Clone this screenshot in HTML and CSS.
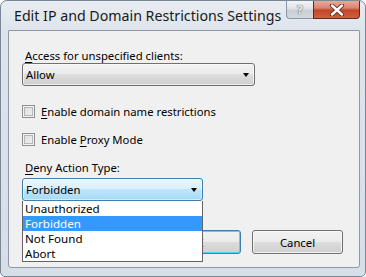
FILE: index.html
```html
<!DOCTYPE html>
<html>
<head>
<meta charset="utf-8">
<link rel="stylesheet" href="styles.css">
</head>
<body>
<div class="window">
  <div class="titlebar">
    <div class="title">Edit IP and Domain Restrictions Settings</div>
    <div class="caption-btns">
      <div class="cbtn help"><span>?</span></div>
      <div class="cbtn close">
        <svg width="18" height="12" viewBox="0 0 18 12">
          <path d="M4 1.5 L14 10.5 M14 1.5 L4 10.5" stroke="#5a2a20" stroke-width="4.2" stroke-linecap="round" fill="none"/>
          <path d="M4 1.5 L14 10.5 M14 1.5 L4 10.5" stroke="#ffffff" stroke-width="2.4" stroke-linecap="round" fill="none"/>
        </svg>
      </div>
    </div>
  </div>
  <div class="client">
    <div class="label first"><u>A</u>ccess for unspecified clients:</div>
    <div class="combo gray wide">
      <span class="combo-text">Allow</span>
      <span class="arrow"></span>
    </div>
    <div class="check-row r1">
      <span class="checkbox"></span>
      <span><u>E</u>nable domain name restrictions</span>
    </div>
    <div class="check-row r2">
      <span class="checkbox"></span>
      <span>Enable <u>P</u>roxy Mode</span>
    </div>
    <div class="label deny"><u>D</u>eny Action Type:</div>
    <div class="combo-wrap">
      <div class="combo blue narrow">
        <span class="combo-text">Forbidden</span>
        <span class="arrow"></span>
      </div>
      <ul class="dropdown">
        <li>Unauthorized</li>
        <li class="sel">Forbidden</li>
        <li>Not Found</li>
        <li>Abort</li>
      </ul>
    </div>
    <div class="buttons">
      <div class="btn ok">OK</div>
      <div class="btn">Cancel</div>
    </div>
  </div>
</div>
</body>
</html>
```
FILE: styles.css
```css
html, body {
  margin: 0;
  padding: 0;
  background: #ffffff;
}
body {
  width: 366px;
  height: 277px;
  overflow: hidden;
  font-family: "Noto Sans", "Open Sans", sans-serif;
}
.window {
  box-sizing: border-box;
  width: 366px;
  height: 277px;
  border: 1px solid #7a8796;
  border-radius: 7px 7px 5px 5px;
  background: linear-gradient(to bottom, #e9edf2 0px, #dde4ec 30px, #d6dee8 100%);
  display: flex;
  flex-direction: column;
}
.titlebar {
  height: 29px;
  display: flex;
  justify-content: space-between;
  align-items: flex-start;
}
.title {
  font-size: 14.2px;
  color: #1a1a1a;
  padding: 6px 0 0 13px;
  line-height: 18px;
  white-space: nowrap;
  flex-shrink: 0;
}
.caption-btns {
  display: flex;
  margin-right: 5px;
  flex-shrink: 0;
}
.cbtn {
  height: 18px;
  box-sizing: border-box;
  display: flex;
  align-items: center;
  justify-content: center;
}
.help {
  width: 27px;
  border: 1px solid #8a96a4;
  border-top: none;
  border-right: none;
  border-radius: 0 0 0 4px;
  background: linear-gradient(to bottom, #f2f4f7 0%, #dfe3e8 45%, #c9ced5 55%, #d5dae1 100%);
}
.help span {
  font-family: "DejaVu Sans", sans-serif;
  font-weight: bold;
  font-size: 12px;
  color: #e8ecf0;
  text-shadow: 0 0 1px #505a66, 0 0 1px #505a66;
  line-height: 12px;
}
.close {
  width: 47px;
  border: 1px solid #5c2a22;
  border-top: none;
  border-radius: 0 0 4px 0;
  background: linear-gradient(to bottom, #e9a99a 0%, #d98670 40%, #c2452a 55%, #d0603f 100%);
}
.client {
  flex: 1;
  margin: 0 5px 8px 7px;
  border: 1px solid #8d99a6;
  border-radius: 1px 1px 3px 3px;
  background: #f0f0f0;
  padding: 0 16px 0 13px;
  font-size: 11.3px;
  line-height: 15px;
  color: #000;
  display: flex;
  flex-direction: column;
  align-items: flex-start;
}
u { text-decoration-thickness: 1px; text-underline-offset: 2px; }
.label {
  padding-left: 3px;
}
.label.first { margin-top: 17px; }
.combo {
  box-sizing: border-box;
  height: 23px;
  border-radius: 3px;
  display: flex;
  align-items: center;
  justify-content: space-between;
  padding: 0 5px 0 3px;
}
.combo.wide { width: 233px; }
.combo.narrow { width: 181px; }
.combo.gray {
  border: 1px solid #707070;
  background: linear-gradient(to bottom, #f2f2f2 0%, #ebebeb 50%, #dddddd 50%, #cfcfcf 100%);
  box-shadow: inset 0 0 0 1px rgba(255,255,255,0.6);
}
.combo.blue {
  border: 1px solid #3c7fb1;
  background: linear-gradient(to bottom, #eaf6fd 0%, #d9f0fc 50%, #bee6fd 50%, #a7d9f5 100%);
  box-shadow: inset 0 0 0 1px rgba(255,255,255,0.5);
}
.arrow {
  width: 0;
  height: 0;
  border-left: 3.5px solid transparent;
  border-right: 3.5px solid transparent;
  border-top: 4px solid #000;
  margin-top: 1px;
}
.check-row {
  display: flex;
  align-items: center;
  gap: 6px;
}
.check-row.r1 { margin-top: 18px; }
.check-row.r2 { margin-top: 13px; }
.checkbox {
  box-sizing: border-box;
  width: 13px;
  height: 13px;
  border: 1px solid #8e8f8f;
  background: linear-gradient(135deg, #d9dadb 0%, #f4f4f4 100%);
  box-shadow: inset 0 0 0 1px #f4f4f4, inset 0 0 0 2px #b5b6b7;
}
.label.deny { margin-top: 13px; }
.combo-wrap {
  position: relative;
  margin-top: 3px;
}
.dropdown {
  position: absolute;
  left: 0;
  top: 23px;
  width: 181px;
  box-sizing: border-box;
  margin: 0;
  padding: 0;
  list-style: none;
  background: #fff;
  border: 1px solid #646464;
  border-top: none;
  z-index: 2;
}
.dropdown li {
  height: 15px;
  line-height: 15px;
  padding-left: 2px;
  font-size: 11.6px;
  overflow: hidden;
}
.dropdown li.sel {
  background: #3399ff;
  color: #fff;
}
.buttons {
  align-self: flex-end;
  display: flex;
  gap: 11px;
  margin-top: 29px;
}
.btn {
  box-sizing: border-box;
  width: 91px;
  height: 24px;
  border: 1px solid #707070;
  border-radius: 3px;
  background: linear-gradient(to bottom, #f2f2f2 0%, #ebebeb 50%, #dddddd 50%, #cfcfcf 100%);
  box-shadow: inset 0 0 0 1px rgba(255,255,255,0.7);
  display: flex;
  align-items: center;
  justify-content: center;
}
.btn.ok {
  border-color: #3c7fb1;
  box-shadow: inset 0 0 0 1px #48d8fb;
}
```
